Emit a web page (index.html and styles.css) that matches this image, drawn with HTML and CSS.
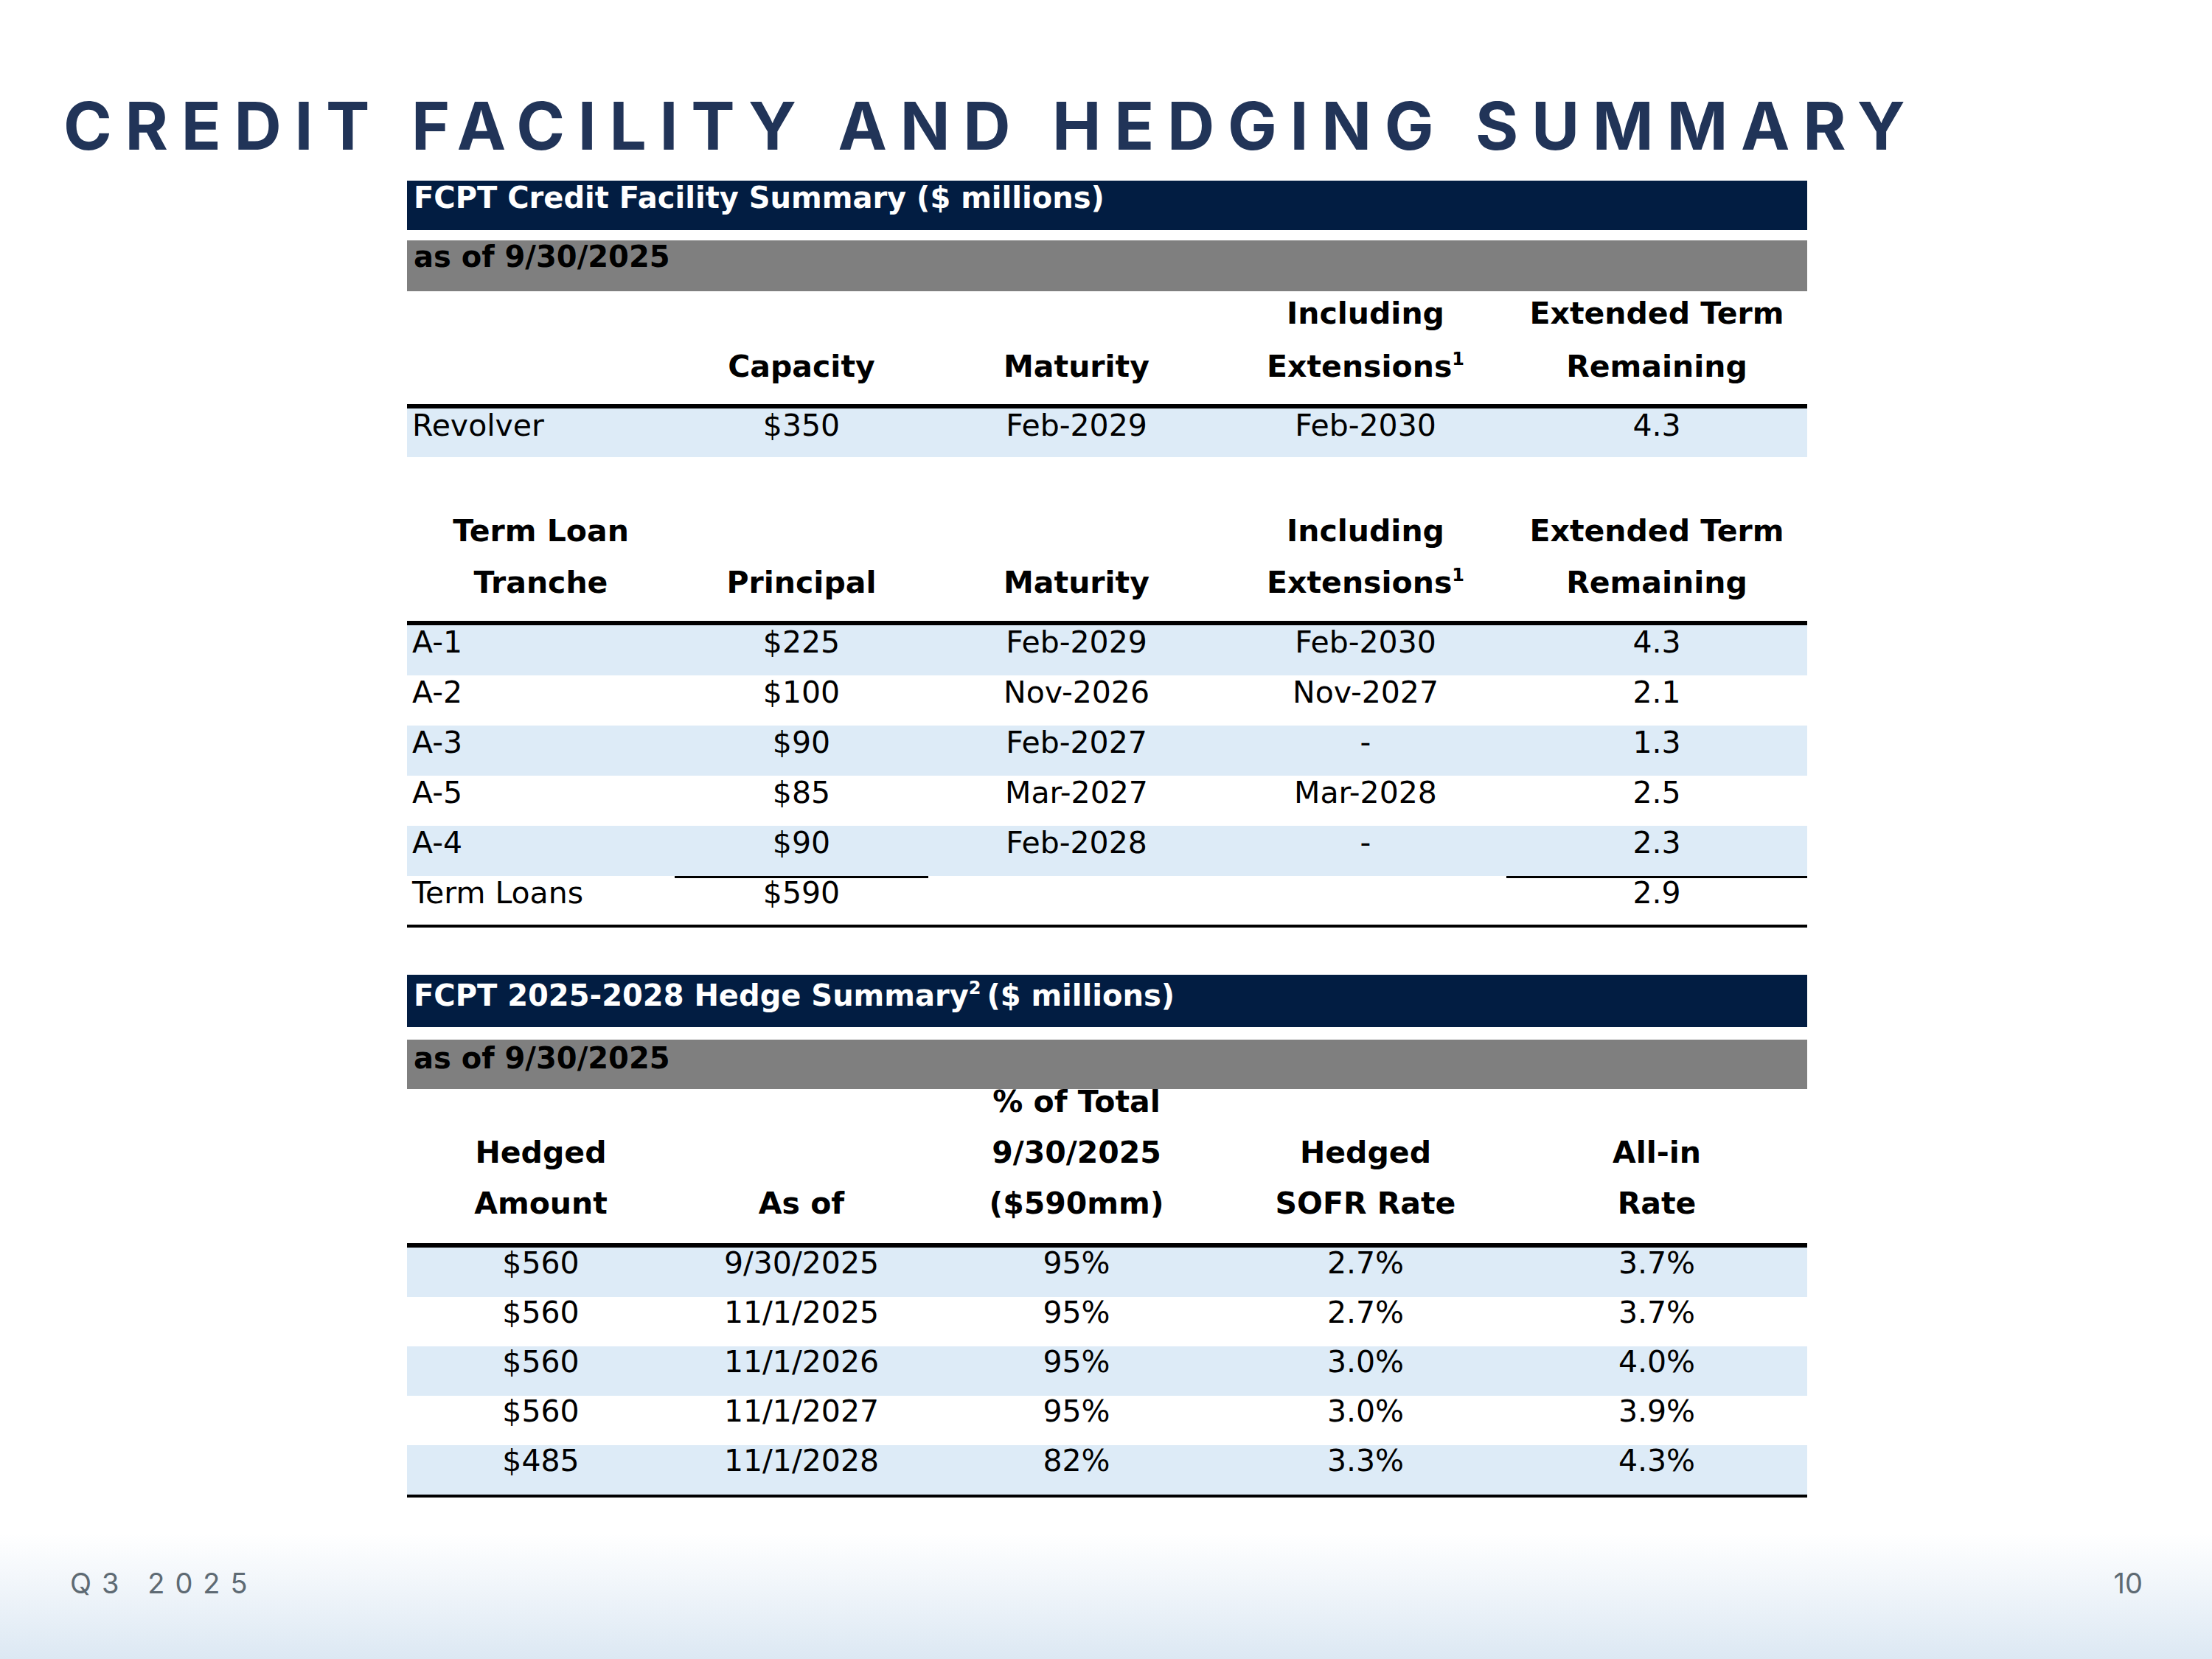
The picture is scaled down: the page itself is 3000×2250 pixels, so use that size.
FILE: index.html
```html
<!DOCTYPE html>
<html>
<head>
<meta charset="utf-8">
<link rel="stylesheet" href="styles.css">
</head>
<body>
<h1 class="title">CREDIT FACILITY AND HEDGING SUMMARY</h1>
<main class="content">
  <div class="bar bar-navy bar-top1">FCPT Credit Facility Summary ($ millions)</div>
  <div class="bar bar-gray bar-gray1">as of 9/30/2025</div>

  <div class="row head head-1">
    <div class="hc"></div>
    <div class="hc"><span>Capacity</span></div>
    <div class="hc"><span>Maturity</span></div>
    <div class="hc"><span>Including</span><span>Extensions<sup>1</sup></span></div>
    <div class="hc"><span>Extended Term</span><span>Remaining</span></div>
  </div>
  <div class="rule-thick"></div>
  <div class="row data blue revolver">
    <div class="dc left">Revolver</div>
    <div class="dc">$350</div>
    <div class="dc">Feb-2029</div>
    <div class="dc">Feb-2030</div>
    <div class="dc">4.3</div>
  </div>

  <div class="row head head-2">
    <div class="hc"><span>Term Loan</span><span>Tranche</span></div>
    <div class="hc"><span>Principal</span></div>
    <div class="hc"><span>Maturity</span></div>
    <div class="hc"><span>Including</span><span>Extensions<sup>1</sup></span></div>
    <div class="hc"><span>Extended Term</span><span>Remaining</span></div>
  </div>
  <div class="rule-thick"></div>
  <div class="row data blue">
    <div class="dc left">A-1</div><div class="dc">$225</div><div class="dc">Feb-2029</div><div class="dc">Feb-2030</div><div class="dc">4.3</div>
  </div>
  <div class="row data">
    <div class="dc left">A-2</div><div class="dc">$100</div><div class="dc">Nov-2026</div><div class="dc">Nov-2027</div><div class="dc">2.1</div>
  </div>
  <div class="row data blue">
    <div class="dc left">A-3</div><div class="dc">$90</div><div class="dc">Feb-2027</div><div class="dc">-</div><div class="dc">1.3</div>
  </div>
  <div class="row data">
    <div class="dc left">A-5</div><div class="dc">$85</div><div class="dc">Mar-2027</div><div class="dc">Mar-2028</div><div class="dc">2.5</div>
  </div>
  <div class="row data blue">
    <div class="dc left">A-4</div><div class="dc">$90</div><div class="dc">Feb-2028</div><div class="dc">-</div><div class="dc">2.3</div>
  </div>
  <div class="row data total">
    <div class="dc left">Term Loans</div><div class="dc sum">$590</div><div class="dc"></div><div class="dc"></div><div class="dc sum">2.9</div>
  </div>
  <div class="rule-end"></div>

  <div class="bar bar-navy bar-top2">FCPT 2025-2028 Hedge Summary<sup>2</sup> ($ millions)</div>
  <div class="bar bar-gray bar-gray2">as of 9/30/2025</div>

  <div class="row head head-3">
    <div class="hc"><span>Hedged</span><span>Amount</span></div>
    <div class="hc"><span>As of</span></div>
    <div class="hc"><span>% of Total</span><span>9/30/2025</span><span>($590mm)</span></div>
    <div class="hc"><span>Hedged</span><span>SOFR Rate</span></div>
    <div class="hc"><span>All-in</span><span>Rate</span></div>
  </div>
  <div class="rule-thick"></div>
  <div class="row data hedge blue">
    <div class="dc">$560</div><div class="dc">9/30/2025</div><div class="dc">95%</div><div class="dc">2.7%</div><div class="dc">3.7%</div>
  </div>
  <div class="row data hedge">
    <div class="dc">$560</div><div class="dc">11/1/2025</div><div class="dc">95%</div><div class="dc">2.7%</div><div class="dc">3.7%</div>
  </div>
  <div class="row data hedge blue">
    <div class="dc">$560</div><div class="dc">11/1/2026</div><div class="dc">95%</div><div class="dc">3.0%</div><div class="dc">4.0%</div>
  </div>
  <div class="row data hedge">
    <div class="dc">$560</div><div class="dc">11/1/2027</div><div class="dc">95%</div><div class="dc">3.0%</div><div class="dc">3.9%</div>
  </div>
  <div class="row data hedge blue">
    <div class="dc">$485</div><div class="dc">11/1/2028</div><div class="dc">82%</div><div class="dc">3.3%</div><div class="dc">4.3%</div>
  </div>
  <div class="rule-end"></div>
</main>
<footer class="footer">
  <span class="period">Q3 2025</span>
  <span class="page">10</span>
</footer>
</body>
</html>
```

FILE: styles.css
```css
* { box-sizing: border-box; margin: 0; padding: 0; }
html, body { width: 3000px; height: 2250px; }
body {
  margin: 0;
  background: #ffffff;
  color: #000;
  font-family: "DejaVu Sans", "Liberation Sans", sans-serif;
  overflow: hidden;
  display: flex;
  flex-direction: column;
}
.title {
  font-family: Inter, "Liberation Sans", sans-serif;
  font-weight: 700;
  font-size: 89px;
  line-height: 89px;
  letter-spacing: 17.7px;
  color: #213458;
  margin: 126px 0 0 86px;
  white-space: nowrap;
}
.content {
  margin: 30px 0 0 552px;
  width: 1899px;
  display: flex;
  flex-direction: column;
}
.bar {
  font-weight: 700;
  font-size: 40px;
  line-height: 40px;
  padding-left: 9px;
  white-space: nowrap;
}
.bar sup, .hc sup {
  font-size: 24px;
  line-height: 0;
  vertical-align: 16px;
}
.bar sup { margin-right: -6px; }
.bar-navy { background: #021d42; color: #ffffff; }
.bar-gray { background: #7f7f7f; color: #000000; }
.bar-top1 { height: 67px; padding-top: 3px; }
.bar-gray1 { height: 69px; margin-top: 14px; padding-top: 2px; }
.bar-top2 { height: 71px; margin-top: 64px; padding-top: 8px; }
.bar-gray2 { height: 67px; margin-top: 17px; padding-top: 5px; }

.row {
  display: grid;
  grid-template-columns: 363px 344px 402px 382px 408px;
}
.head { grid-template-rows: minmax(0, 1fr); }
.head .hc {
  display: flex;
  flex-direction: column;
  justify-content: flex-end;
  align-items: center;
  min-height: 0;
  font-weight: 700;
  font-size: 41px;
  white-space: nowrap;
}
.head-1 { height: 153px; }
.head-1 .hc { line-height: 72px; padding-bottom: 15px; }
.head-2 { height: 222px; }
.head-2 .hc { line-height: 70px; padding-bottom: 17px; }
.head-3 { height: 209px; }
.head-3 .hc { line-height: 69px; padding-bottom: 19px; }

.rule-thick { height: 6px; background: #000; }
.rule-end { height: 4px; background: #000; }

.data { height: 68px; }
.data.revolver { height: 66px; }
.data.total { height: 66px; }
.data.hedge { height: 67px; }
.blue { background: #ddebf7; }
.dc {
  font-size: 41px;
  line-height: 41px;
  padding-top: 3px;
  text-align: center;
  white-space: nowrap;
}
.hedge .dc { padding-top: 1px; }
.dc.left { text-align: left; padding-left: 7px; }
.dc.sum { border-top: 3px solid #000; padding-top: 0; }

.footer {
  margin-top: auto;
  height: 170px;
  display: flex;
  justify-content: space-between;
  align-items: flex-start;
  padding: 48px 94px 0 95px;
  background: linear-gradient(to bottom, #ffffff 0%, #f3f7fb 35%, #dce8f3 100%);
  font-family: Inter, "Liberation Sans", sans-serif;
  font-size: 38px;
  line-height: 38px;
  color: #5e6a73;
}
.period { letter-spacing: 14px; }
.page { letter-spacing: 0; }
```
